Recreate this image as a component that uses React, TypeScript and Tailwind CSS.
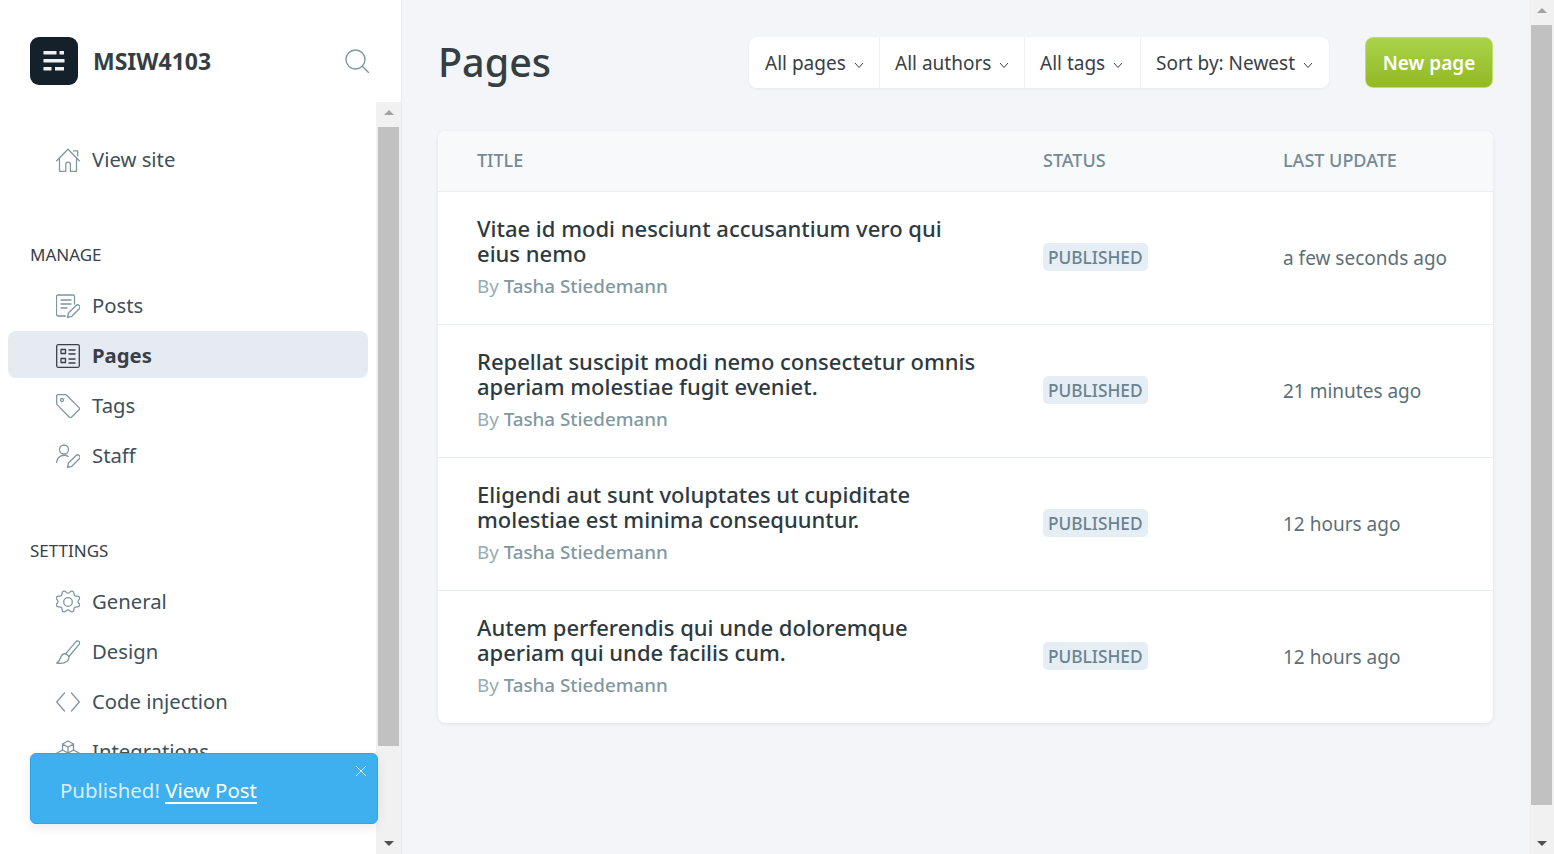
import React from 'react';

const font = { fontFamily: '"Noto Sans", sans-serif' };

const Icon = (props: { className?: string; children: React.ReactNode }) => (
  <svg
    className={props.className ?? 'w-6 h-6 text-[#7e97a3]'}
    viewBox="0 0 24 24"
    fill="none"
    stroke="currentColor"
    strokeWidth={1.3}
    strokeLinecap="round"
    strokeLinejoin="round"
  >
    {props.children}
  </svg>
);

const HomeIcon = () => (
  <Icon>
    <path d="M.7 12.800 12 1.200l11.300 11.600" />
    <path d="M17.500 2.800h4.200v5" />
    <path d="M3.500 10.500v12.800h6.300v-6.800a2.300 2.300 0 0 1 4.600 0v6.800h6.100V10.500" />
  </Icon>
);
const PostsIcon = () => (
  <Icon>
    <path d="M9.500 22H2a1.500 1.500 0 0 1-1.500-1.500v-18A1.500 1.500 0 0 1 2 1h15a1.500 1.500 0 0 1 1.500 1.500V10" />
    <path d="M5 6h10M5 10h10M5 14h6" />
    <path d="m11.500 23.500 1-4.500 7.500-7.500a2.300 2.300 0 0 1 3.300 3.200L15.800 22.300z" />
  </Icon>
);
const PagesIcon = () => (
  <Icon className="w-6 h-6 text-[#394047]">
    <rect x="0.700" y="0.700" width="22.600" height="22.600" rx="1.500" />
    <rect x="5" y="5.500" width="4.500" height="4" />
    <rect x="5" y="14.500" width="4.500" height="4" />
    <path d="M13 6h6M13 10h6M13 15h6M13 19h6" />
  </Icon>
);
const TagIcon = () => (
  <Icon>
    <path d="M1.500.7h7.800a2 2 0 0 1 1.400.6l12.300 12.300a1.500 1.500 0 0 1 0 2.100l-7.500 7.500a1.500 1.500 0 0 1-2.100 0L1.300 10.900a2 2 0 0 1-.6-1.400V1.500a.8.8 0 0 1 .8-.8z" />
    <circle cx="6" cy="6" r="1.500" />
  </Icon>
);
const StaffIcon = () => (
  <Icon>
    <circle cx="8" cy="5.500" r="4.500" />
    <path d="M.7 18.500a7.500 7.500 0 0 1 11.500-6" />
    <path d="m11.500 23.500 1-4.500 7.500-7.500a2.300 2.300 0 0 1 3.300 3.200L15.800 22.300z" />
  </Icon>
);
const GearIcon = () => (
  <Icon>
    <circle cx="12" cy="12" r="4.300" />
    <path d="M10.200 2.400a2.500 2.500 0 0 0 3.600 0l.6-.7a2 2 0 0 1 3.400 1l.1 1a2.500 2.500 0 0 0 2.600 2.500l1-.1a2 2 0 0 1 1.800 3l-.6.800a2.500 2.500 0 0 0 0 3.200l.6.800a2 2 0 0 1-1.800 3l-1-.1a2.500 2.500 0 0 0-2.600 2.500l-.1 1a2 2 0 0 1-3.400 1l-.6-.7a2.500 2.500 0 0 0-3.600 0l-.6.700a2 2 0 0 1-3.400-1l-.1-1a2.500 2.500 0 0 0-2.600-2.500l-1 .1a2 2 0 0 1-1.800-3l.6-.8a2.500 2.500 0 0 0 0-3.200l-.6-.8a2 2 0 0 1 1.800-3l1 .1a2.500 2.500 0 0 0 2.600-2.500l.1-1a2 2 0 0 1 3.400-1z" />
  </Icon>
);
const BrushIcon = () => (
  <Icon>
    <path d="M9.500 13.800 19.800 1.800a2.100 2.100 0 0 1 3.300 2.600L13 16.500" />
    <path d="M9.500 13.500c-2.500.2-4.200 1.600-4.800 4-.5 2.200-1.800 4-4 5.500 3.500.6 7.500.5 10-1.500 1.800-1.500 2.600-3.200 2.300-5z" />
  </Icon>
);
const CodeIcon = () => (
  <Icon>
    <path d="M8.500 3 .7 12l7.800 9M15.500 3l7.800 9-7.800 9" />
  </Icon>
);
const CubeIcon = () => (
  <Icon>
    <path d="m12 1 5.500 3v6L12 13l-5.500-3V4zM6.500 4l5.500 3 5.500-3M12 7v6" />
    <path d="M6.500 10 1 13v6l5.500 3 5.500-3 5.500 3 5.500-3v-6l-5.500-3M12 13v6" />
  </Icon>
);

const Chevron = () => (
  <svg className="w-[10px] h-[10px] text-[#394047] ml-2 mt-[3px]" viewBox="0 0 10 10" fill="none" stroke="currentColor" strokeWidth={1}>
    <path d="M1 3l4 4.500L9 3" />
  </svg>
);

const NavItem = (props: { icon: React.ReactNode; label: string; active?: boolean }) => (
  <div
    className={
      'h-[47px] ml-2 w-[360px] rounded-lg flex items-center pl-12 text-[20.300px] ' +
      (props.active ? '-mt-px mb-[4px] pt-[2px] bg-[#e6eaf1] font-bold text-[#394047]' : 'mb-[3px] text-[#40505a]')
    }
  >
    <span className="w-9 shrink-0">{props.icon}</span>
    <span>{props.label}</span>
  </div>
);

const SectionLabel = (props: { children: React.ReactNode }) => (
  <div className="pl-[30px] h-6 leading-6 text-[17px] text-[#394047] mb-[15px]">{props.children}</div>
);

const Scrollbar = (props: { thumbTop: string; thumbHeight: string; className: string }) => (
  <div className={'bg-[#f1f1f1] flex flex-col items-center relative ' + props.className}>
    <div className="mt-2 w-0 h-0 border-x-[5.500px] border-x-transparent border-b-[5.500px] border-b-[#a3a3a3]" />
    <div className={'absolute left-[2px] right-[2px] bg-[#c1c1c1] ' + props.thumbTop + ' ' + props.thumbHeight} />
    <div className="mt-auto mb-2 w-0 h-0 border-x-[5.500px] border-x-transparent border-t-[5.500px] border-t-[#505050]" />
  </div>
);

const filters = ['All pages', 'All authors', 'All tags', 'Sort by: Newest'];
const filterWidths = ['w-[130px]', 'w-[145px]', 'w-[116px]', 'w-[189px]'];

const rows = [
  { title: ['Vitae id modi nesciunt accusantium vero qui', 'eius nemo'], time: 'a few seconds ago' },
  { title: ['Repellat suscipit modi nemo consectetur omnis', 'aperiam molestiae fugit eveniet.'], time: '21 minutes ago' },
  { title: ['Eligendi aut sunt voluptates ut cupiditate', 'molestiae est minima consequuntur.'], time: '12 hours ago' },
  { title: ['Autem perferendis qui unde doloremque', 'aperiam qui unde facilis cum.'], time: '12 hours ago' },
];

export default function App() {
  return (
    <div className="h-[854px] w-[1554px] flex overflow-hidden bg-[#f4f5f8] text-[#394047]" style={font}>
      {/* Sidebar */}
      <aside className="w-[402px] shrink-0 h-full flex flex-col bg-white border-r border-[#e8ebf2] relative">
        <div className="h-[102px] shrink-0 flex items-center pl-[30px] pr-[32px] pt-[20px]">
          <div className="w-12 h-12 rounded-[9px] bg-[#15212a] flex items-center justify-center">
            <svg className="w-6 h-6" viewBox="0 0 24 24" fill="#eef0f2">
              <rect x="1.500" y="2" width="13" height="3.500" />
              <rect x="17.500" y="2" width="4.500" height="3.500" />
              <rect x="1.500" y="10" width="21" height="3.500" />
              <rect x="1.500" y="18" width="8" height="3.500" />
              <rect x="13" y="18" width="9" height="3.500" />
            </svg>
          </div>
          <div className="ml-[15px] text-[23px] font-bold text-[#343f44] flex-1">MSIW4103</div>
          <svg className="w-6 h-6 text-[#7e97a3]" viewBox="0 0 24 24" fill="none" stroke="currentColor" strokeWidth={1.400} strokeLinecap="round">
            <circle cx="10.500" cy="10.500" r="9.500" />
            <path d="m17.500 17.500 6 6" />
          </svg>
        </div>
        <div className="flex-1 flex min-h-0">
          <div className="flex-1 overflow-hidden pt-[34px]">
            <NavItem icon={<HomeIcon />} label="View site" />
            <div className="h-[57px]" />
            <SectionLabel>MANAGE</SectionLabel>
            <NavItem icon={<PostsIcon />} label="Posts" />
            <NavItem active icon={<PagesIcon />} label="Pages" />
            <NavItem icon={<TagIcon />} label="Tags" />
            <NavItem icon={<StaffIcon />} label="Staff" />
            <div className="h-[57px]" />
            <SectionLabel>SETTINGS</SectionLabel>
            <NavItem icon={<GearIcon />} label="General" />
            <NavItem icon={<BrushIcon />} label="Design" />
            <NavItem icon={<CodeIcon />} label="Code injection" />
            <NavItem icon={<CubeIcon />} label="Integrations" />
          </div>
          <Scrollbar className="w-[25px]" thumbTop="top-[25px]" thumbHeight="h-[619px]" />
        </div>
        {/* Toast */}
        <div className="absolute left-[30px] top-[753px] w-[348px] h-[71px] rounded-md bg-[#3eb0ef] border border-[#26a6ed] shadow-[0_4px_12px_rgba(0,0,0,0.08)] flex items-center pl-[29px] pt-1 text-[20.400px] z-10">
          <span className="text-[#d8effc]">Published!&nbsp;</span>
          <span className="text-white underline underline-offset-4">View Post</span>
          <svg className="absolute right-[10px] top-[11px] w-3 h-3 text-[#d8effc]" viewBox="0 0 12 12" fill="none" stroke="currentColor" strokeWidth={1}>
            <path d="M1 1l10 10M11 1 1 11" />
          </svg>
        </div>
      </aside>

      {/* Main */}
      <main className="flex-1 min-w-0 px-9 pt-[37px]">
        <div className="flex items-start h-[51px]">
          <h1 className="text-[39.500px] leading-[51px] font-medium text-[#343f44] flex-1">Pages</h1>
          <div className="flex h-[51px] bg-white rounded-lg shadow-[0_1px_3px_rgba(0,0,0,0.06)]">
            {filters.map((f, i) => (
              <div
                key={f}
                className={
                  'flex items-center pt-[2px] text-[19px] text-[#394047] ' +
                  filterWidths[i] +
                  (i > 0 ? ' pl-[15px] border-l border-[#eef0f3]' : ' pl-4')
                }
              >
                {f}
                <Chevron />
              </div>
            ))}
          </div>
          <button className="ml-[36px] w-[128px] h-[51px] pt-[2px] rounded-lg border border-[#bfe070] bg-gradient-to-b from-[#a9d34a] to-[#93b921] text-white text-[19px] font-semibold">
            New page
          </button>
        </div>

        <div className="mt-[43px] bg-white rounded-lg shadow-[0_1px_4px_rgba(0,0,0,0.08)] overflow-hidden">
          <div className="h-[61px] pb-[2px] bg-[#f8f9fb] border-b border-[#e8edf2] flex items-center text-[18px] font-medium text-[#738a96]">
            <div className="w-[605px] pl-[39px]">TITLE</div>
            <div className="w-[240px]">STATUS</div>
            <div>LAST UPDATE</div>
          </div>
          {rows.map((row, i) => (
            <div key={i} className={'flex items-center ' + (i < rows.length - 1 ? 'h-[133px] border-b border-[#e8edf2]' : 'h-[132px]')}>
              <div className="w-[605px] pl-[39px]">
                <div className="text-[22px] leading-[25px] font-medium text-[#2e3a40]">
                  {row.title[0]}
                  <br />
                  {row.title[1]}
                </div>
                <div className="mt-[6px] text-[18.800px] leading-[28px] text-[#97abb6]">
                  By <span className="font-medium text-[#82989f]">Tasha Stiedemann</span>
                </div>
              </div>
              <div className="w-[240px]">
                <span className="inline-block h-[28px] leading-[30px] px-[5px] mb-[2px] rounded-[5px] bg-[#e5eef5] text-[17.300px] font-medium text-[#6b838f]">
                  PUBLISHED
                </span>
              </div>
              <div className="text-[19px] text-[#5c6f79]">{row.time}</div>
            </div>
          ))}
        </div>
      </main>

      <Scrollbar className="w-[25px] shrink-0 h-full" thumbTop="top-[25px]" thumbHeight="h-[780px]" />
    </div>
  );
}
